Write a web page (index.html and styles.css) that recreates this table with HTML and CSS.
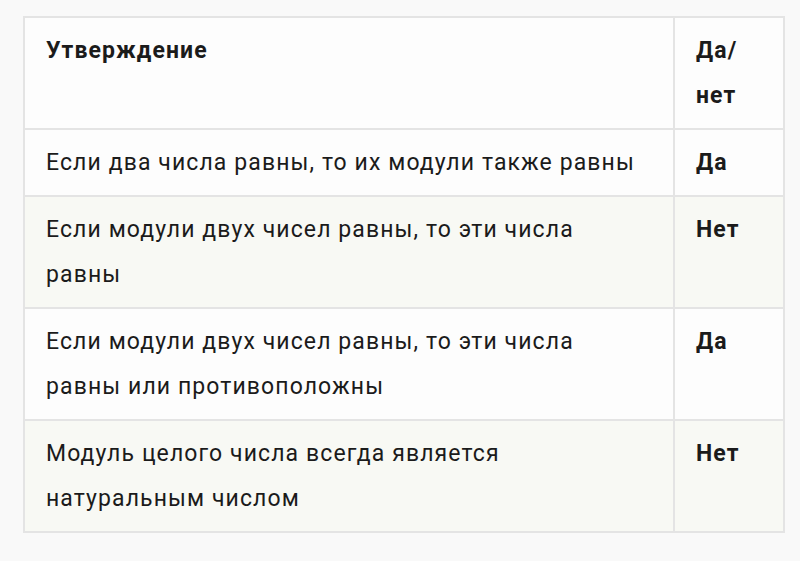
FILE: index.html
```html
<!DOCTYPE html>
<html lang="ru">
<head>
<meta charset="utf-8">
<link rel="stylesheet" href="styles.css">
</head>
<body>
<table class="tbl">
  <colgroup><col class="c1"><col class="c2"></colgroup>
  <thead>
    <tr><th>Утверждение</th><th>Да/ нет</th></tr>
  </thead>
  <tbody>
    <tr><td>Если два числа равны, то их модули также равны</td><td class="ans">Да</td></tr>
    <tr class="alt"><td>Если модули двух чисел равны, то эти числа равны</td><td class="ans">Нет</td></tr>
    <tr><td>Если модули двух чисел равны, то эти числа равны или противоположны</td><td class="ans">Да</td></tr>
    <tr class="alt"><td>Модуль целого числа всегда является натуральным числом</td><td class="ans">Нет</td></tr>
  </tbody>
</table>
</body>
</html>
```
FILE: styles.css
```css
html, body {
  margin: 0;
  background: #f9f9f9;
}
body {
  padding: 16px 17px 0 23px;
  font-family: Roboto, "Liberation Sans", sans-serif;
  color: #1b1b1b;
}
.tbl {
  border-collapse: collapse;
  table-layout: fixed;
  width: 760px;
  background: #fdfdfd;
  font-size: 23px;
  line-height: 45px;
  letter-spacing: 1.1px;
}
.c1 { width: 650px; }
.c2 { width: 110px; }
.tbl th, .tbl td {
  border: 2px solid #e4e4e4;
  padding: 10px 30px 10px 21px;
  text-align: left;
  vertical-align: top;
}
.tbl th { font-weight: 700; }
.tbl td.ans { font-weight: 700; padding-right: 10px; }
.tbl th:last-child { padding-right: 10px; }
.tbl tr.alt td { background: #f8f9f4; }
```
